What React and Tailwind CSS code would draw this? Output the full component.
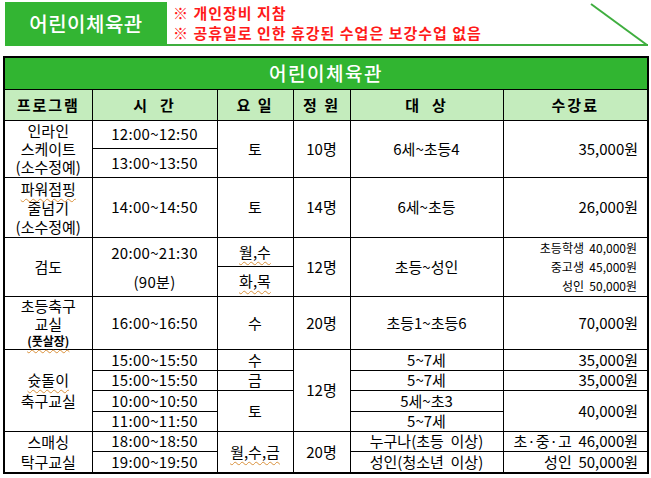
import React from "react";

const sq = "underline decoration-wavy decoration-[#d9903a] decoration-1 underline-offset-[3px]";
const td = "border border-black text-center align-middle p-0";
const tm = "border border-black text-center align-middle p-0 tracking-[0.3px]";
const fee = "border border-black text-right align-middle p-0 pr-[9px]";

export default function App() {
  return (
    <div
      className="w-[651px] h-[478px] bg-white text-black overflow-hidden"
      style={{ fontFamily: '"Noto Sans CJK KR", "Noto Sans", sans-serif' }}
    >
      {/* top banner */}
      <div className="flex pt-[2px] pl-[5px] pr-[3px] h-[47px]">
        <div className="w-[162px] h-[44px] bg-[#33b533] flex items-center justify-center text-white text-[20px] font-medium tracking-[0.5px]">
          어린이체육관
        </div>
        <div className="flex-1 flex border-b-2 border-[#3fae3f] h-[44px]">
          <div className="flex-1 flex flex-col justify-center pl-[6px] text-[#ff1a1a] text-[15px] font-bold leading-[20px] tracking-[1px]">
            <div>※ 개인장비 지참</div>
            <div>※ 공휴일로 인한 휴강된 수업은 보강수업 없음</div>
          </div>
          <svg width="58" height="44" viewBox="0 0 58 44" className="shrink-0">
            <line x1="1" y1="2" x2="57" y2="43" stroke="#3fae3f" strokeWidth="2" />
          </svg>
        </div>
      </div>

      <div className="pl-[3px] pt-[9px]">
        <table className="table-fixed border-collapse border-2 border-black w-[644px] text-[15px] leading-[18px]">
          <colgroup>
            <col className="w-[88px]" />
            <col className="w-[125px]" />
            <col className="w-[76px]" />
            <col className="w-[57px]" />
            <col className="w-[153px]" />
            <col className="w-[145px]" />
          </colgroup>
          <tbody>
            <tr>
              <td colSpan={6} className="border border-black bg-[#31b531] h-[32px] text-center text-white text-[19px] font-medium tracking-[1.5px]">
                어린이체육관
              </td>
            </tr>
            <tr className="bg-[#c4ecbd] font-bold tracking-[2px]">
              <td className={td + " h-[31px]"}>프로그램</td>
              <td className={td}>시&nbsp;&nbsp;간</td>
              <td className={td}>요 일</td>
              <td className={td}>정 원</td>
              <td className={td}>대&nbsp;&nbsp;상</td>
              <td className={td}>수강료</td>
            </tr>

            <tr>
              <td rowSpan={2} className={td}>
                인라인
                <br />
                스케이트
                <br />
                (소수정예)
              </td>
              <td className={tm + " h-[28px]"}>12:00~12:50</td>
              <td rowSpan={2} className={td}>토</td>
              <td rowSpan={2} className={td}>10명</td>
              <td rowSpan={2} className={td}>6세~초등4</td>
              <td rowSpan={2} className={fee}>35,000원</td>
            </tr>
            <tr>
              <td className={tm + " h-[29px]"}>13:00~13:50</td>
            </tr>

            <tr>
              <td className={td + " h-[60px] leading-[19px]"}>
                <span className={sq}>파워점핑</span>
                <br />
                줄넘기
                <br />
                (소수정예)
              </td>
              <td className={tm}>14:00~14:50</td>
              <td className={td}>토</td>
              <td className={td}>14명</td>
              <td className={td}>6세~초등</td>
              <td className={fee}>26,000원</td>
            </tr>

            <tr>
              <td rowSpan={2} className={td}>검도</td>
              <td rowSpan={2} className={tm + " leading-[29px]"}>
                20:00~21:30
                <br />
                (90분)
              </td>
              <td className={td + " h-[29px]"}>
                <span className={sq}>월,수</span>
              </td>
              <td rowSpan={2} className={td}>12명</td>
              <td rowSpan={2} className={td}>초등~성인</td>
              <td rowSpan={2} className={fee + " text-[12px] leading-[19px] pr-[10px]"}>
                초등학생&nbsp;&nbsp;40,000원
                <br />
                중고생&nbsp;&nbsp;45,000원
                <br />
                성인&nbsp;&nbsp;50,000원
              </td>
            </tr>
            <tr>
              <td className={td + " h-[30px]"}>
                <span className={sq}>화,목</span>
              </td>
            </tr>

            <tr>
              <td className={td + " h-[53px]"}>
                <div className="leading-[18px]">초등축구</div>
                <div className="leading-[18px]">교실</div>
                <div className="leading-[15px] text-[12px] font-bold">
                  <span className={sq}>(풋살장)</span>
                </div>
              </td>
              <td className={tm}>16:00~16:50</td>
              <td className={td}>수</td>
              <td className={td}>20명</td>
              <td className={td}>초등1~초등6</td>
              <td className={fee}>70,000원</td>
            </tr>

            <tr>
              <td rowSpan={4} className={td + " leading-[21px]"}>
                <span className={sq}>슛돌이</span>
                <br />
                축구교실
              </td>
              <td className={tm + " h-[21px]"}>15:00~15:50</td>
              <td className={td}>수</td>
              <td rowSpan={4} className={td}>12명</td>
              <td className={td}>5~7세</td>
              <td className={fee}>35,000원</td>
            </tr>
            <tr>
              <td className={tm + " h-[20px]"}>15:00~15:50</td>
              <td className={td}>금</td>
              <td className={td}>5~7세</td>
              <td className={fee}>35,000원</td>
            </tr>
            <tr>
              <td className={tm + " h-[21px]"}>10:00~10:50</td>
              <td rowSpan={2} className={td}>토</td>
              <td className={td}>5세~초3</td>
              <td rowSpan={2} className={fee}>40,000원</td>
            </tr>
            <tr>
              <td className={tm + " h-[20px]"}>11:00~11:50</td>
              <td className={td}>5~7세</td>
            </tr>

            <tr>
              <td rowSpan={2} className={td + " leading-[20px]"}>
                스매싱
                <br />
                탁구교실
              </td>
              <td className={tm + " h-[20px]"}>18:00~18:50</td>
              <td rowSpan={2} className={td}>
                <span className={sq}>월,수,금</span>
              </td>
              <td rowSpan={2} className={td}>20명</td>
              <td className={td}>누구나(초등&nbsp;&nbsp;이상)</td>
              <td className={fee}>초·중·고&nbsp;&nbsp;46,000원</td>
            </tr>
            <tr>
              <td className={tm + " h-[20px]"}>19:00~19:50</td>
              <td className={td}>성인(청소년&nbsp;&nbsp;이상)</td>
              <td className={fee}>성인&nbsp;&nbsp;50,000원</td>
            </tr>
          </tbody>
        </table>
      </div>
    </div>
  );
}
